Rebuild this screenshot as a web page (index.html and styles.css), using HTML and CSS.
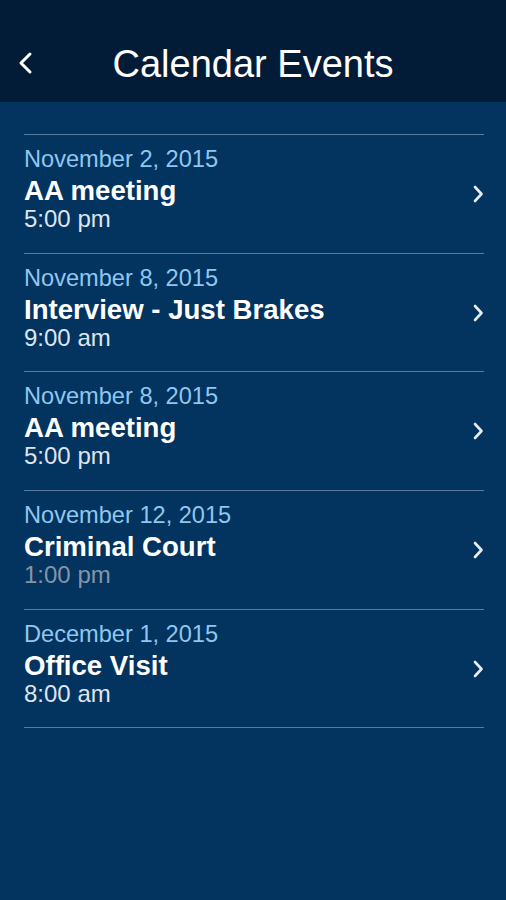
FILE: index.html
```html
<!DOCTYPE html>
<html lang="en">
<head>
  <meta charset="UTF-8">
  <meta name="viewport" content="width=device-width, initial-scale=1.0">
  <title>Calendar Events</title>
  <link rel="stylesheet" href="styles.css">
</head>
<body>
  <div class="header">
    <svg class="back" width="16" height="24" viewBox="0 0 16 24">
      <path d="M13 3 L4 12 L13 21" fill="none" stroke="#fff" stroke-width="3" stroke-linecap="round" stroke-linejoin="round"/>
    </svg>
    <h1>Calendar Events</h1>
  </div>

  <div class="events">
    <div class="event">
      <div class="info">
        <div class="date">November 2, 2015</div>
        <div class="title">AA meeting</div>
        <div class="time">5:00 pm</div>
      </div>
      <svg class="arrow" width="12" height="18" viewBox="0 0 12 18">
        <path d="M3 2 L9.5 9 L3 16" fill="none" stroke="#e8edf3" stroke-width="2.6" stroke-linecap="round" stroke-linejoin="round"/>
      </svg>
    </div>
    <div class="event">
      <div class="info">
        <div class="date">November 8, 2015</div>
        <div class="title">Interview - Just Brakes</div>
        <div class="time">9:00 am</div>
      </div>
      <svg class="arrow" width="12" height="18" viewBox="0 0 12 18">
        <path d="M3 2 L9.5 9 L3 16" fill="none" stroke="#e8edf3" stroke-width="2.6" stroke-linecap="round" stroke-linejoin="round"/>
      </svg>
    </div>
    <div class="event">
      <div class="info">
        <div class="date">November 8, 2015</div>
        <div class="title">AA meeting</div>
        <div class="time">5:00 pm</div>
      </div>
      <svg class="arrow" width="12" height="18" viewBox="0 0 12 18">
        <path d="M3 2 L9.5 9 L3 16" fill="none" stroke="#e8edf3" stroke-width="2.6" stroke-linecap="round" stroke-linejoin="round"/>
      </svg>
    </div>
    <div class="event">
      <div class="info">
        <div class="date">November 12, 2015</div>
        <div class="title">Criminal Court</div>
        <div class="time past">1:00 pm</div>
      </div>
      <svg class="arrow" width="12" height="18" viewBox="0 0 12 18">
        <path d="M3 2 L9.5 9 L3 16" fill="none" stroke="#e8edf3" stroke-width="2.6" stroke-linecap="round" stroke-linejoin="round"/>
      </svg>
    </div>
    <div class="event">
      <div class="info">
        <div class="date">December 1, 2015</div>
        <div class="title">Office Visit</div>
        <div class="time">8:00 am</div>
      </div>
      <svg class="arrow" width="12" height="18" viewBox="0 0 12 18">
        <path d="M3 2 L9.5 9 L3 16" fill="none" stroke="#e8edf3" stroke-width="2.6" stroke-linecap="round" stroke-linejoin="round"/>
      </svg>
    </div>
  </div>
</body>
</html>
```

FILE: styles.css
```css
html, body {
  height: 100%;
}
body {
  margin: 0;
  font-family: 'Liberation Sans', Arial, sans-serif;
  background-color: #03335f;
  color: #fff;
}
.header {
  position: relative;
  height: 102px;
  box-sizing: border-box;
  padding-top: 43px;
  background-color: #021b36;
}
.header h1 {
  margin: 0;
  text-align: center;
  font-size: 38px;
  font-weight: normal;
  line-height: 42px;
  color: #fff;
}
.back {
  position: absolute;
  left: 17px;
  top: 51px;
}
.events {
  margin: 32px 22px 0 24px;
  border-top: 1px solid #587a9f;
}
.event {
  display: flex;
  align-items: center;
  justify-content: space-between;
  height: 118.7px;
  box-sizing: border-box;
  padding-top: 10px;
  border-bottom: 1px solid #587a9f;
}
.info {
  display: flex;
  flex-direction: column;
}
.date {
  font-size: 23.6px;
  line-height: 28px;
  color: #8fc7ee;
}
.title {
  margin-top: 3px;
  font-size: 27.6px;
  font-weight: bold;
  line-height: 30px;
  color: #fff;
}
.time {
  font-size: 24px;
  line-height: 26px;
  padding-bottom: 21px;
  color: #dfe5ec;
}
.time.past {
  color: #8595a6;
}
.arrow {
  margin-top: -10px;
}
```
